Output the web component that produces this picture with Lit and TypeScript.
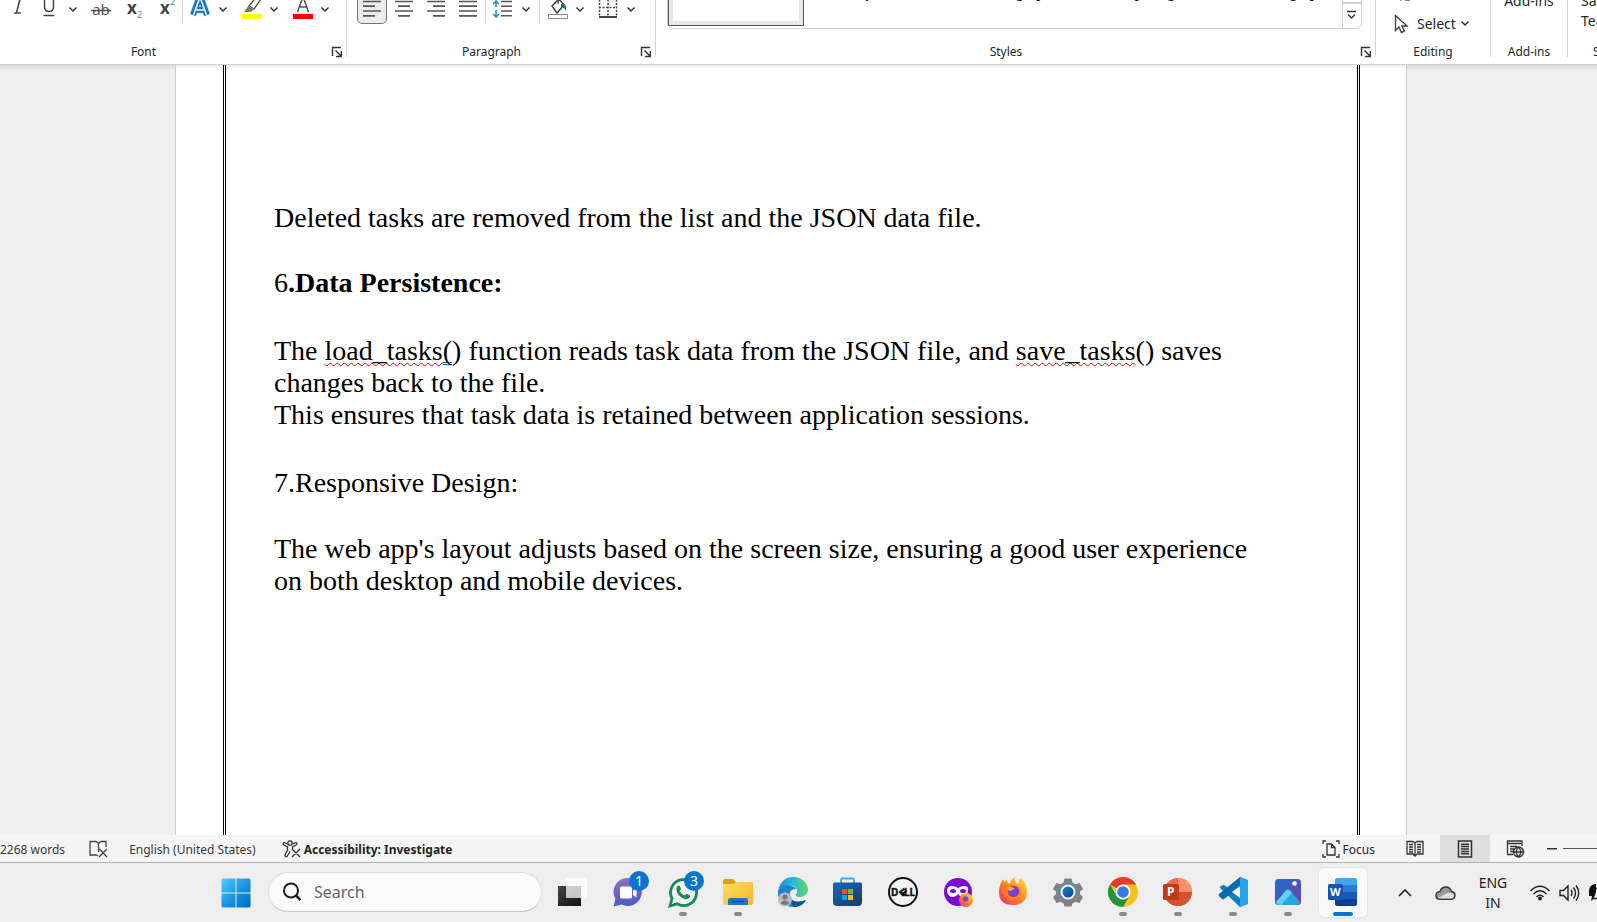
import { LitElement, html, css, svg } from "lit";
import { customElement, property } from "lit/decorators.js";

const chevron = html`<svg width="16" height="40" viewBox="0 -16 16 40"><path d="M4.500 7.500l3.500 3.500 3.500-3.500" fill="none" stroke="#333" stroke-width="1.500"/></svg>`;
const launcher = html`<svg width="12" height="12" viewBox="0 0 12 12" fill="none" stroke="#333" stroke-width="1.400"><path d="M1.500 10V1.500H10M4.500 4.500l5.500 5.500M10.300 5v5.500H5"/></svg>`;

// the four alignment icons only differ in where the short lines start and end
const alignLines = (shortFrom: number, shortTo: number) => svg`
  <path d="M6 1.500h18M${shortFrom} 6.200H${shortTo}M6 11h18M${shortFrom} 15.800H${shortTo}" stroke="#555" stroke-width="1.700"/>`;

const tools: Record<string, unknown> = {
  Italic: svg`<path d="M13-3h7M11 13h7M17.500-3l-4 16" fill="none" stroke="#444" stroke-width="1.600"/>`,
  Underline: svg`<path d="M9.500-3v9.500q0 5 4.500 5t4.500-5V-3M8.500 15.500h11" fill="none" stroke="#444" stroke-width="1.500"/>`,
  Strikethrough: svg`<text x="15" y="15" text-anchor="middle" font-size="15" fill="#555">ab</text><path d="M5 10.500h20" stroke="#444" stroke-width="1.400"/>`,
  Subscript: svg`<text x="9" y="14" font-size="17" font-weight="bold" fill="#444">x</text><text x="19" y="18" font-size="9" fill="#2b8fd0">2</text>`,
  Superscript: svg`<text x="10" y="14" font-size="17" font-weight="bold" fill="#444">x</text><text x="20" y="5" font-size="9" fill="#2b8fd0">2</text>`,
  "Text Effects": svg`<path d="M8 15L14.500-3h1L22 15M10.500 10h9" fill="none" stroke="#8fccf5" stroke-width="7"/><path d="M8 15L14.500-3h1L22 15M10.500 10h9" fill="none" stroke="#1673bd" stroke-width="5.500"/><path d="M8.500 15L15-3l6.500 18M11 10h8" fill="none" stroke="#fff" stroke-width="1.500"/>`,
  "Text Highlight Color": svg`<path d="M13 6L21-4l4 3-7 10z" fill="#fff" stroke="#555" stroke-width="1.400"/><path d="M13 5l5 4-3 3H8z" fill="#777"/><path d="M6 14h20v5H6z" fill="#ff0"/>`,
  "Font Color": svg`<path d="M10.500 12L15.500-2h1l5 14M12.500 7h7" fill="none" stroke="#555" stroke-width="1.500"/><path d="M6 14h20v5H6z" fill="#f00"/>`,
  "Align Left": alignLines(6, 18),
  Center: alignLines(9, 21),
  "Align Right": alignLines(12, 24),
  Justify: alignLines(6, 24),
  "Line Spacing": svg`<path d="M13 1.500h11M13 6.200h11M13 11h11M13 15.800h11" stroke="#555" stroke-width="1.600"/><path d="M8 7V1M5 4l3-3 3 3M8 10v7M5 14l3 3 3-3" fill="none" stroke="#2b8fd0" stroke-width="1.600"/>`,
  Shading: svg`<path d="M10 6l7-7 5 6-7 8z" fill="#fff" stroke="#444" stroke-width="1.500"/><path d="M16-4v8" stroke="#444" stroke-width="1.300"/><path d="M19 4q6-2 5 7-2-4-5-4z" fill="#1673a8"/><path d="M6.500 14.500h19v4h-19z" fill="#fff" stroke="#888"/>`,
  Borders: svg`<path d="M6.500-4v20M15-4v20M23.500-4v20M6 7.500h18" fill="none" stroke="#444" stroke-width="1.500" stroke-dasharray="2 1.500"/><path d="M6 17h18" stroke="#444" stroke-width="2"/>`,
};

@customElement("word-ribbon")
export class WordRibbon extends LitElement {
  static styles = css`
    :host {
      display: block;
      overflow: hidden;
      background: #fff;
      border-bottom: 1px solid #d2d2d2;
      color: #262626;
      font-size: 12px;
      line-height: 16px;
    }
    /* ribbon is scrolled up, its first rows are out of view */
    .groups {
      display: flex;
      height: 73px;
      margin: -16px 0 7px;
    }
    .group {
      flex: none;
      box-sizing: border-box;
      border-right: 1px solid #d0d0d0;
      display: flex;
      flex-direction: column;
      justify-content: space-between;
    }
    /* the font group begins left of the window */
    .font {
      width: 387px;
      margin-left: -40px;
    }
    .paragraph { width: 309px; }
    .styles { flex: 1; min-width: 0; }
    .editing { width: 115px; }
    .addins { width: 77px; }
    .teams { width: 80px; margin-right: -51px; }
    .row {
      display: flex;
      gap: 2px;
      padding-left: 10px;
    }
    .font .row { padding-left: 43px; }
    .split {
      display: flex;
      margin-right: 3px;
    }
    .line {
      width: 1px;
      background: #d0d0d0;
    }
    button {
      border: 0;
      padding: 0;
      margin: 0;
      background: none;
      color: inherit;
      font: inherit;
      display: block;
    }
    svg { display: block; }
    button.on {
      background: #ececec;
      box-shadow: inset 0 0 0 1px #777;
      border-radius: 5px;
    }
    .foot {
      display: flex;
      margin-bottom: -3px;
      text-align: center;
    }
    .foot span { flex: 1; white-space: nowrap; }
    .foot button { width: 15px; padding: 2px 0; }
    .foot span:first-child:not(:last-child) { padding-right: 4px; }
    .gallery {
      display: flex;
      box-sizing: border-box;
      height: 45px;
      margin: 0 13px 0 11px;
      border: 1px solid #d0d0d0;
      border-radius: 5px;
      overflow: hidden;
    }
    .style {
      flex: 1;
      min-width: 0;
      height: 41px;
      padding-top: 1px;
      overflow: hidden;
      display: flex;
      justify-content: center;
      align-items: flex-start;
      font: bold 14px/16px "Liberation Serif", serif;
      color: #000;
    }
    .style.on {
      box-sizing: border-box;
      border: 1px solid #555;
      border-radius: 0;
      background: #fff;
      box-shadow: inset 0 0 0 4px #e8e8e8;
    }
    .scroll {
      width: 18px;
      border-left: 1px solid #d0d0d0;
    }
    .scroll button {
      width: 18px;
      height: 19px;
      border-bottom: 2px solid #d0d0d0;
    }
    .scroll button + button {
      height: 24px;
      border-bottom: 0;
    }
    .big {
      font-size: 14px;
      line-height: 20px;
    }
    .editing .big {
      display: flex;
      flex-direction: column;
      padding-left: 18px;
    }
    .select {
      display: flex;
      align-items: center;
      gap: 8px;
    }
    .select svg:last-child { margin-left: -3px; }
    .editing .replace { height: 30px; padding-bottom: 14px; }
    .addins .big, .teams .big { padding-top: 7px; }
    .addins .big { text-align: center; }
    .addins .big button { margin: 0 auto; }
    .teams .big button { padding-left: 13px; text-align: left; }
    .teams .foot { padding-left: 25px; text-align: left; }
  `;

  tool(name: string, on = false) {
    return html`<button class=${on ? "on" : ""} aria-label=${name}>
      <svg width="30" height="40" viewBox="0 -16 30 40">${tools[name]}</svg>
    </button>`;
  }

  split(name: string) {
    return html`<div class="split">${this.tool(name)}<button aria-label="${name} options">${chevron}</button></div>`;
  }

  foot(label: string, open = false) {
    return html`<div class="foot"><span>${label}</span>${open ? html`<button aria-label="${label} settings">${launcher}</button>` : ""}</div>`;
  }

  render() {
    return html`
      <div class="groups">
        <div class="group font">
          <div class="row">
            ${this.tool("Italic")}${this.split("Underline")}${this.tool("Strikethrough")}
            ${this.tool("Subscript")}${this.tool("Superscript")}
            <div class="line"></div>
            ${this.split("Text Effects")}${this.split("Text Highlight Color")}${this.split("Font Color")}
          </div>
          ${this.foot("Font", true)}
        </div>
        <div class="group paragraph">
          <div class="row">
            ${this.tool("Align Left", true)}${this.tool("Center")}${this.tool("Align Right")}${this.tool("Justify")}
            <div class="line"></div>
            ${this.split("Line Spacing")}
            <div class="line"></div>
            ${this.split("Shading")}${this.split("Borders")}
          </div>
          ${this.foot("Paragraph", true)}
        </div>
        <div class="group styles">
          <div class="gallery">
            <button class="style on" aria-label="Normal"></button>
            ${["Body Text", "List Paragraph", "No Spacing", "Table Paragraph"].map((s) => html`<button class="style">${s}</button>`)}
            <div class="scroll">
              <button aria-label="Scroll down"></button>
              <button aria-label="More styles">
                <svg width="18" height="24" viewBox="0 0 18 24" fill="none" stroke="#333" stroke-width="1.400"><path d="M4 7.500h9M5 10.500l3.500 3.500 3.500-3.500"/></svg>
              </button>
            </div>
          </div>
          ${this.foot("Styles", true)}
        </div>
        <div class="group editing">
          <div class="big">
            <button class="replace" aria-label="Replace">
              <svg width="20" height="18" viewBox="0 -16 20 18"><path d="M3-4l4 4 3-4" fill="none" stroke="#2b8fd0" stroke-width="1.500"/><path d="M12-3v3h4" fill="none" stroke="#555" stroke-width="1.500"/></svg>
            </button>
            <button class="select">
              <svg width="15" height="20" viewBox="0 0 15 20"><path d="M1.500 1.500v15l3.500-3.500 2.500 5.500 3-1.500-2.500-5h5z" fill="#fff" stroke="#444" stroke-width="1.400"/></svg>
              Select
              <svg width="9" height="12" viewBox="4 4 9 12"><path d="M4.500 7.500l3.500 3.500 3.500-3.500" fill="none" stroke="#333" stroke-width="1.500"/></svg>
            </button>
          </div>
          ${this.foot("Editing")}
        </div>
        <div class="group addins">
          <div class="big"><button>Add-ins</button></div>
          ${this.foot("Add-ins")}
        </div>
        <div class="group teams">
          <div class="big"><button>Save to<br />Teams</button></div>
          ${this.foot("Save")}
        </div>
      </div>
    `;
  }
}

@customElement("word-page")
export class WordPage extends LitElement {
  static styles = css`
    :host {
      flex: 1;
      min-height: 0;
      display: flex;
      justify-content: center;
      padding-right: 15px;
      background: linear-gradient(#dcdcdc, #efefef 6px);
      overflow: hidden;
    }
    .sheet {
      flex: none;
      width: 1230px;
      padding: 0 46px 0 47px;
      box-sizing: border-box;
      display: flex;
      background: linear-gradient(#eee, #fff 5px);
      box-shadow: -1px 0 #cdcdcd, 1px 0 #cdcdcd;
    }
    .frame {
      flex: 1;
      border: 3px double #000;
      border-width: 0 3px;
      padding: 137px 96px 0 48px;
      color: #000;
      font: 28px/32px "Liberation Serif", "Times New Roman", serif;
    }
    p {
      margin: 0 0 34px;
    }
    p.lead {
      margin-bottom: 33px;
    }
    p.tight {
      margin: 0;
    }
    p.wide {
      margin-bottom: 36px;
    }
    .spell {
      text-decoration: underline wavy #e00000 1px;
      text-decoration-skip-ink: none;
      text-underline-offset: 2px;
    }
    .grammar {
      text-decoration: underline double #2a5fc8 1px;
      text-decoration-skip-ink: none;
      text-underline-offset: 2px;
    }
  `;

  render() {
    return html`
      <article class="sheet">
        <div class="frame">
          <p class="lead">Deleted tasks are removed from the list and the JSON data file.</p>
          <p class="wide">6<b>.Data Persistence:</b></p>
          <p class="tight">The <span class="spell">load_tasks</span><span class="grammar">(</span>) function reads task data from the JSON file, and <span class="spell">save_tasks</span>() saves changes back to the file.</p>
          <p class="wide">This ensures that task data is retained between application sessions.</p>
          <p>7.Responsive Design:</p>
          <p>The web app's layout adjusts based on the screen size, ensuring a good user experience on both desktop and mobile devices.</p>
        </div>
      </article>
    `;
  }
}

@customElement("status-bar")
export class StatusBar extends LitElement {
  static styles = css`
    :host {
      display: flex;
      height: 27px;
      background: #f5f5f5;
      border-bottom: 1px solid #b4b4b4;
      color: #3a3a3a;
      font-size: 12px;
      overflow: hidden;
    }
    button {
      display: flex;
      align-items: center;
      gap: 3px;
      border: 0;
      padding: 1px 0 0;
      background: none;
      color: inherit;
      font: inherit;
      white-space: nowrap;
    }
    svg { display: block; flex: none; }
    .proof { margin: 0 21px 0 24px; }
    .access { margin-left: 26px; font-weight: bold; color: #222; }
    .focus { margin: 0 15px 0 auto; color: #222; }
    .view {
      width: 50px;
      justify-content: center;
    }
    .view.on { background: #dedede; }
    .minus { width: 10px; margin-left: 7px; }
    .slider {
      appearance: none;
      width: 120px;
      height: 1px;
      margin: 13px -86px 0 6px;
      background: #555;
    }
    .slider::-webkit-slider-thumb {
      appearance: none;
      width: 5px;
      height: 14px;
      background: #444;
    }
  `;

  render() {
    return html`
      <button>2268 words</button>
      <button class="proof" aria-label="Proofing errors">
        <svg width="19" height="18" viewBox="0 0 19 18" fill="none" stroke="#444" stroke-width="1.300"><path d="M9 16L7 15H1V1.500h6l2.500 2V12M9.500 3.500L12 1.500h5V7M10.500 9l7.500 8M18 9l-8 8"/></svg>
      </button>
      <button>English (United States)</button>
      <button class="access">
        <svg width="19" height="18" viewBox="0 0 19 18" fill="none" stroke="#333" stroke-width="1.300"><circle cx="8" cy="3" r="2.200"/><path d="M5.500 4L2 2.500Q0 3.500 2 5l3.500 2v3L3 15q0 2 2 1.500L8 11.500M10.500 4L14 2.500q2 1 0 2.500l-3.500 2v2M10 9l8 8M18 9l-8 8"/></svg>
        Accessibility: Investigate
      </button>
      <button class="focus">
        <svg width="18" height="18" viewBox="0 0 18 18" fill="none" stroke="#333" stroke-width="1.300"><path d="M4 1H1v3M14 1h3v3M1 14v3h3M17 14v3h-3M5 4h4.500L13 7.500V15H5zM9.500 4v3.500H13"/></svg>
        Focus
      </button>
      <button class="view" aria-label="Read Mode">
        <svg width="18" height="18" viewBox="0 0 18 18" fill="none" stroke="#333" stroke-width="1.300"><path d="M9 3L7 1.500H1V14h6l2 2 2-2h6V1.500h-6zV16M3 4.500h4M3 7h4M3 9.500h4M3 12h4M11 4.500h4M11 7h4M11 9.500h4M11 12h4"/></svg>
      </button>
      <button class="view on" aria-label="Print Layout">
        <svg width="16" height="18" viewBox="0 0 16 18" fill="none" stroke="#333" stroke-width="1.500"><path d="M1.500 1h13v16h-13zM4 4.200h8M4 6.600h8M4 9h8M4 11.400h8M4 13.800h8"/></svg>
      </button>
      <button class="view" aria-label="Web Layout">
        <svg width="19" height="18" viewBox="0 0 19 18" fill="none" stroke="#333" stroke-width="1.300"><path d="M7 14.500H1.500V1H16v5M1.500 3.500H16M4 6.500h7M4 9h4M4 11.500h3"/><circle cx="12.500" cy="12" r="5" stroke-width="1.500"/><path d="M7.500 12h10M12.500 7q-4.500 5 0 10M12.500 7q4.500 5 0 10"/></svg>
      </button>
      <button class="minus" aria-label="Zoom out">
        <svg width="10" height="2" viewBox="0 0 10 2"><path d="M0 0h10v1.500H0z" fill="#333"/></svg>
      </button>
      <input class="slider" type="range" aria-label="Zoom" value="90" />
    `;
  }
}

interface TaskbarApp {
  name: string;
  icon: unknown;
  badge?: number;
  running?: boolean;
  active?: boolean;
}

const apps: TaskbarApp[] = [
  { name: "Task View", icon: svg`<path d="M0 9h23v20H0z" fill="url(#tv)"/><rect x="8" y="1" width="21" height="20" rx="1" fill="#fff" opacity=".75"/>` },
  { name: "Chat", badge: 1, icon: svg`<path d="M15 1A14 14 0 1 1 8.500 27.500L.500 29.500 2.500 22A14 14 0 0 1 15 1z" fill="url(#chat)"/><rect x="7" y="9.500" width="12" height="12" rx="1.500" fill="#fff"/><path d="M20 14l3.500-3v9.500L20 18z" fill="#fff"/>` },
  { name: "WhatsApp", badge: 3, running: true, icon: svg`<path d="M2 29l2-7.500A13 13 0 1 1 9 26.800z" fill="#f4f4f4" stroke="#168a55" stroke-width="2.800"/><path d="M9 9.500q2-2 3 0l1 2.500-1.500 2q1.500 3 5 4.500l1.800-1.800 3.500 1.500q1 .800-.500 2.800-2.500 2-6 .500Q10 19 8.500 14q-.500-3 .500-4.500z" fill="#168a55"/>` },
  { name: "File Explorer", running: true, icon: svg`<path d="M0 4q0-2 2-2h8l3 3h15q2 0 2 2v10H0z" fill="#dca10c"/><path d="M0 7h11l2-2h15q2 0 2 2v19q0 2-2 2H2q-2 0-2-2z" fill="url(#folder)"/><path d="M5 28v-5q0-2 2-2h16q2 0 2 2v5z" fill="#1b78c4"/><path d="M9 24.500h12" stroke="#0b4f91" stroke-width="1.500"/>` },
  { name: "Edge", icon: svg`<path d="M0 14C2 4 8 0 15 0c9 0 15 6 15 13 0 4-4 7-8 7-3 0-5-1-4-3 1-1 1-2 1-3 0-3-3-5-6-5-6 0-12 1-13 5z" fill="url(#edge)"/><path d="M0 14c2-5 8-7 13-5 2 .500 4 1 5 3-5 0-7 3-6 7 1 5 6 7 16 4-3 5-7 7-12 7C7 30-1 24 0 14z" fill="#1b86cf"/><path d="M12 15q-2 9 8 10 4 0 8-2-4 7-12 7-5-4-4-15z" fill="#14529a"/><circle cx="7" cy="22.500" r="7" fill="#bbb"/><circle cx="7" cy="20" r="2.600" fill="#777"/><path d="M2.500 26q4.500-5 9 0-4.500 4-9 0z" fill="#777"/>` },
  { name: "Microsoft Store", icon: svg`<path d="M8 7V3q0-1.500 1.500-1.500h10Q21 1.500 21 3v4" fill="none" stroke="#35b4ea" stroke-width="2"/><path d="M0 7q0-1.500 1.500-1.500h26Q29 5.500 29 7v18q0 4-4 4H4q-4 0-4-4z" fill="url(#store)"/><path d="M9 12h5v5H9z" fill="#f25022"/><path d="M15 12h5v5h-5z" fill="#7fba00"/><path d="M9 18h5v5H9z" fill="#00a4ef"/><path d="M15 18h5v5h-5z" fill="#ffb900"/>` },
  { name: "Dell", icon: svg`<circle cx="15" cy="15" r="14" fill="#f4f4f4" stroke="#111" stroke-width="2"/><text x="3" y="19" font-size="10" font-weight="bold" fill="#111" stroke="#111" stroke-width=".4">D</text><path d="M10.500 15l5-4 1.500 1.500-3 2.300.5.700 4-2.800.8 1.500-3 2.300 1.200 0v2.300l-3 .700z" fill="#111"/><text x="16" y="19" font-size="10" font-weight="bold" fill="#111" stroke="#111" stroke-width=".4">LL</text>` },
  { name: "Firefox Private Browsing", icon: svg`<circle cx="15" cy="15" r="14" fill="#7a0bd0"/><path d="M4 14q0-5 5-5 3 0 6 2 3-2 6-2 5 0 4 5-1 6-5 6-3 0-5-3-2 3-5 3-5 0-6-6z" fill="#fff"/><ellipse cx="10" cy="14" rx="3" ry="2" fill="#7a0bd0"/><ellipse cx="20" cy="14" rx="3" ry="2" fill="#7a0bd0"/><circle cx="23" cy="23" r="7" fill="url(#fox)"/><circle cx="22.500" cy="22" r="2.800" fill="#7a4be0"/>` },
  { name: "Firefox", icon: svg`<path d="M17 0q-1 5 3 7l2-6q7 5 7 13 0 14-14 14T1 15q0-7 4-13l1 3 3-2q0 3 3 4 0-4 5-7z" fill="url(#fox)"/><path d="M4 10q5-5 11-2 8 0 8 8t-8 8-9-6z" fill="#ff7a24"/><circle cx="15.500" cy="14.500" r="5.500" fill="#7440d8"/><path d="M8 10q6-1 9 2-3 0-4 2-2 1-5-4z" fill="#ffab2e"/>` },
  { name: "Settings", icon: svg`<path d="M11.500 1.500h7l1 4 3 1.800 4-1.300 3.500 6-3 2.800v2.400l3 2.800-3.500 6-4-1.300-3 1.800-1 3h-7l-1-3-3-1.800-4 1.300L0 20l3-2.800v-2.400L0 12l3.500-6 4 1.300 3-1.800z" fill="#7b838b"/><circle cx="15" cy="15" r="7.500" fill="#f3f5f7"/><circle cx="15" cy="15" r="5.500" fill="url(#gear)"/>` },
  { name: "Chrome", running: true, icon: svg`<circle cx="15" cy="15" r="15" fill="#fbc116"/><path d="M15 15L2 7.500A15 15 0 0 1 28 7.500H15z" fill="#e33b2e"/><path d="M2 7.500l6.500 11.300L15 22.500 21.500 18.800 15 30A15 15 0 0 1 2 7.500z" fill="#229342"/><circle cx="15" cy="15" r="7.500" fill="#fff"/><circle cx="15" cy="15" r="5.800" fill="#3978e8"/>` },
  { name: "PowerPoint", running: true, icon: svg`<circle cx="15" cy="15" r="14" fill="#ed6c47"/><path d="M15 1a14 14 0 0 1 14 14H15z" fill="#ff8f6b"/><path d="M1 15h28a14 14 0 0 1-28 0z" fill="#d35230"/><rect y="7" width="16" height="16" rx="1.500" fill="#c13b1b"/><text x="4" y="19" font-size="12" font-weight="bold" fill="#fff">P</text>` },
  { name: "Visual Studio Code", running: true, icon: svg`<path d="M22 0l8 3v24l-8 3L3 12q-2-2 0-3l2-1q1-.500 2 .500L22 20z" fill="#0f7fc4"/><path d="M22 0v10L6 22q-1 .800-2 0l-3-3q-1-1 0-2z" fill="#0a6cad"/><path d="M22 0l7 3q1 .500 1 2v20q0 1.500-1 2l-7 3z" fill="#27a5ec"/><path d="M22 9v12l-8-6z" fill="#f2f2f2"/>` },
  { name: "Photos", running: true, icon: svg`<rect x="2" y="2" width="26" height="26" rx="3.500" fill="url(#photo)"/><path d="M3 25l9.500-11q2.500-3 5 0L27 25q-1 3-3.500 3h-17Q4 28 3 25z" fill="#27a8df"/><path d="M3 25l9.500-11q2.500-3 5 0l1.500 1.800L8 28Q4 28 3 25z" fill="#5cd1f2"/><circle cx="21.500" cy="6.500" r="2.300" fill="#fff"/>` },
  { name: "Word", active: true, icon: svg`<path d="M7 3q0-2 2-2h18q2 0 2 2v5H7z" fill="#41a5ee"/><path d="M7 8h22v7H7z" fill="#2b7cd3"/><path d="M7 15h22v7H7z" fill="#185abd"/><path d="M7 22h22v5q0 2-2 2H9q-2 0-2-2z" fill="#103f91"/><rect x="0" y="7" width="15" height="16" rx="1.500" fill="#1556b5"/><text x="2" y="19" font-size="11" font-weight="bold" fill="#fff">W</text>` },
];

// gradients are looked up inside the same shadow root as the icons
const gradients = svg`
  <linearGradient id="tv" x2="1" y2="1"><stop stop-color="#444"/><stop offset="1" stop-color="#111"/></linearGradient>
  <linearGradient id="chat" x2="0" y2="1"><stop stop-color="#8f6cc0"/><stop offset="1" stop-color="#4f58c9"/></linearGradient>
  <linearGradient id="folder" x2="1" y2="1"><stop stop-color="#ffdc66"/><stop offset="1" stop-color="#f6b822"/></linearGradient>
  <linearGradient id="edge" x2="1" y2="0"><stop stop-color="#1c8fdc"/><stop offset=".5" stop-color="#2ab8d8"/><stop offset="1" stop-color="#5ddb62"/></linearGradient>
  <linearGradient id="store" x2="1" y2="1"><stop stop-color="#0f6cba"/><stop offset="1" stop-color="#1b3a63"/></linearGradient>
  <linearGradient id="fox" x1="1" y1="0" x2="0" y2="1"><stop stop-color="#ffe23a"/><stop offset=".5" stop-color="#ff8a26"/><stop offset="1" stop-color="#f0246a"/></linearGradient>
  <linearGradient id="gear" x2="1" y2="1"><stop stop-color="#1f86d6"/><stop offset="1" stop-color="#0a3f80"/></linearGradient>
  <linearGradient id="photo" x2="1" y2="1"><stop stop-color="#1a6fd0"/><stop offset="1" stop-color="#7442a0"/></linearGradient>`;

@customElement("taskbar-app")
export class TaskbarAppButton extends LitElement {
  static styles = css`
    button {
      position: relative;
      display: flex;
      flex-direction: column;
      align-items: center;
      box-sizing: border-box;
      width: 48px;
      height: 49px;
      padding: 9px 0 0;
      gap: 5px;
      border: 0;
      border-radius: 5px;
      background: none;
      font: inherit;
    }
    .active {
      background: #fafafa;
      box-shadow: 0 0 1px 1px #e4e4e4;
    }
    .mark {
      width: 8px;
      height: 4px;
      border-radius: 2px;
      background: #8a8a8a;
    }
    .active .mark {
      width: 20px;
      background: #0a74d0;
    }
    .badge {
      position: absolute;
      top: 3px;
      right: 3px;
      width: 20px;
      border-radius: 10px;
      background: #0a74d0;
      color: #fff;
      font-size: 14px;
      line-height: 20px;
      text-align: center;
    }
  `;

  @property({ attribute: false })
  app!: TaskbarApp;

  render() {
    const { name, icon, badge, running, active } = this.app;
    return html`
      <button class=${active ? "active" : ""} aria-label=${name}>
        <svg width="30" height="30" viewBox="0 0 30 30" overflow="visible"><defs>${gradients}</defs>${icon}</svg>
        ${running || active ? html`<span class="mark"></span>` : ""}
        ${badge ? html`<span class="badge">${badge}</span>` : ""}
      </button>
    `;
  }
}

@customElement("task-bar")
export class TaskBar extends LitElement {
  static styles = css`
    :host {
      display: flex;
      align-items: flex-start;
      height: 59px;
      box-sizing: border-box;
      padding: 5px 0 0 212px;
      background: #eee;
      overflow: hidden;
      color: #222;
    }
    .start, .tray button {
      display: flex;
      align-items: center;
      justify-content: center;
      flex: none;
      height: 49px;
      border: 0;
      padding: 0;
      background: none;
      color: inherit;
      font: inherit;
    }
    .start { width: 48px; }
    .search {
      display: flex;
      align-items: center;
      gap: 13px;
      box-sizing: border-box;
      width: 274px;
      height: 40px;
      margin: 4px 7px 0 8px;
      padding-left: 14px;
      border: 1px solid #ddd;
      border-bottom-color: #c8c8c8;
      border-radius: 20px;
      background: #fbfbfb;
    }
    input {
      flex: 1;
      min-width: 0;
      border: 0;
      padding: 0;
      outline: 0;
      background: none;
      font: inherit;
      font-size: 16px;
    }
    input::placeholder { color: #666; opacity: 1; }
    .apps { display: flex; gap: 7px; }
    .tray {
      display: flex;
      margin: 0 -15px 0 auto;
      font-size: 14px;
      line-height: 20px;
    }
    .tray .plain { width: 40px; }
    .tray .lang { width: 56px; }
    .tray .status { gap: 8px; padding-left: 8px; }
    svg { display: block; flex: none; }
  `;

  render() {
    return html`
      <button class="start" aria-label="Start">
        <svg width="30" height="30" viewBox="0 0 30 30">
          <defs><linearGradient id="win" gradientUnits="userSpaceOnUse" x1="0" y1="0" x2="30" y2="30"><stop stop-color="#4fd0ff"/><stop offset=".5" stop-color="#1b96e0"/><stop offset="1" stop-color="#0068c8"/></linearGradient></defs>
          <path d="M2 .500h12.500v14H.500V2Q.500.500 2 .500zM15.500.500H28q1.500 0 1.500 1.500v12.500h-14zM.500 15.500h14v14H2Q.500 29.500.500 28zM15.500 15.500h14V28q0 1.500-1.500 1.500H15.500z" fill="url(#win)"/>
        </svg>
      </button>
      <label class="search">
        <svg width="18" height="20" viewBox="0 0 18 20" fill="none" stroke="#222" stroke-width="2"><circle cx="8" cy="8.500" r="7"/><path d="M13 13.500l4.500 4.500" stroke-width="2.500"/></svg>
        <input type="text" placeholder="Search" aria-label="Search" />
      </label>
      <div class="apps">${apps.map((app) => html`<taskbar-app .app=${app}></taskbar-app>`)}</div>
      <div class="tray">
        <button class="plain" aria-label="Show hidden icons">
          <svg width="14" height="8" viewBox="0 0 14 8"><path d="M1 7l6-6 6 6" fill="none" stroke="#222" stroke-width="1.600"/></svg>
        </button>
        <button class="plain" aria-label="OneDrive">
          <svg width="21" height="14" viewBox="0 0 21 14"><path d="M5 13.200q-4 0-4-3.800 0-3.400 4-4Q6.500 1 11 1q4 0 5.500 4.500 3.500.500 3.500 3.800 0 3.900-4 3.900z" fill="#999" stroke="#333" stroke-width="1.400"/><path d="M3 12l9-5q6-1 7 2.500-.500 3-3 3H5z" fill="#ddd"/></svg>
        </button>
        <button class="lang">ENG<br />IN</button>
        <button class="status" aria-label="Network, volume and battery">
          <svg width="22" height="16" viewBox="0 0 22 16" fill="none" stroke="#222" stroke-width="1.500"><path d="M1.500 6q9.500-9.500 19 0M4.500 9q6.500-6.500 13 0M7.500 12q3.500-3.500 7 0"/><circle cx="11" cy="13.500" r="1.200" fill="#222"/></svg>
          <svg width="21" height="18" viewBox="0 0 21 18" fill="none" stroke="#222" stroke-width="1.400"><path d="M1 6.500h3.500L9 2v14l-4.500-4.500H1zM12 6q2 3 0 6M14.500 3.500q4 5.500 0 11M17 1.500q5.500 7.500 0 15"/></svg>
          <svg width="24" height="18" viewBox="0 0 24 18"><path d="M1 8Q1 0 8 0v8l-1 3q-1 4-4 6l1-5H1z" fill="#111"/><path d="M7 4.500h14v10H4" fill="none" stroke="#222" stroke-width="1.500"/></svg>
        </button>
      </div>
    `;
  }
}

@customElement("app-root")
export class AppRoot extends LitElement {
  static styles = css`
    :host {
      display: flex;
      flex-direction: column;
      height: 100vh;
      overflow: hidden;
      font-family: "Noto Sans", "Segoe UI", sans-serif;
    }
    word-ribbon, status-bar, task-bar { flex: none; }
  `;

  render() {
    return html`
      <word-ribbon></word-ribbon>
      <word-page></word-page>
      <status-bar></status-bar>
      <task-bar></task-bar>
    `;
  }
}
